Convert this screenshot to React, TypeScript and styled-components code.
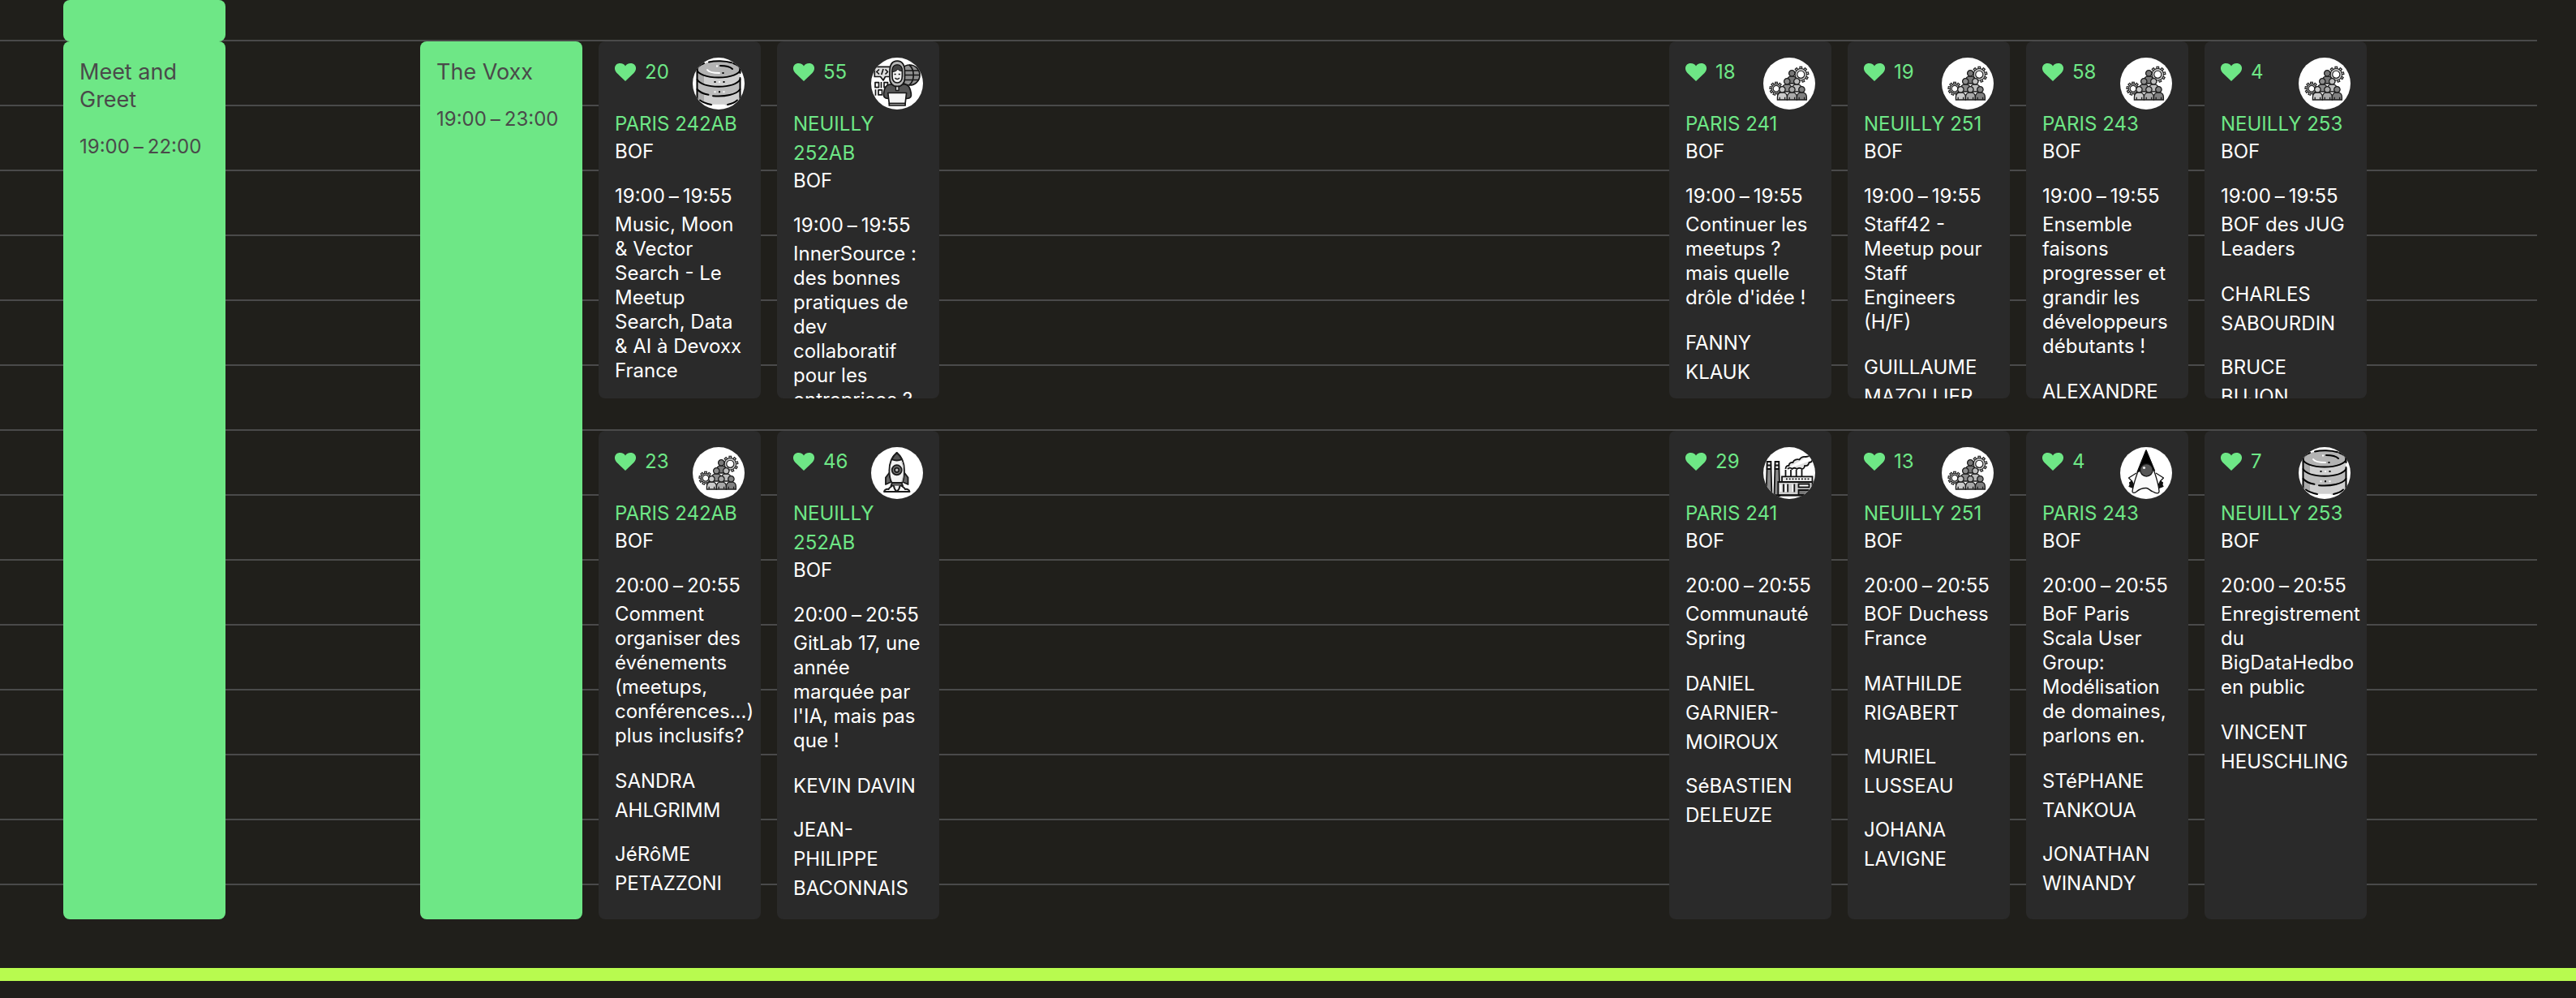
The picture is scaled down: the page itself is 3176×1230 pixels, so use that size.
import React from "react";
import styled, { createGlobalStyle } from "styled-components";

const GlobalStyle = createGlobalStyle`
  *, *::before, *::after { box-sizing: border-box; }
  body {
    margin: 0;
    background: #201f1b;
    color: #ffffff;
    font-family: Inter, "Noto Sans", "Liberation Sans", sans-serif;
    font-size: 24px;
    line-height: 36px;
  }
  h3, p, ul { margin: 0; padding: 0; font-weight: 400; font-size: inherit; }
`;

const Page = styled.main`
  overflow: hidden;
`;

const Schedule = styled.section`
  display: grid;
  grid-template-columns: 68px repeat(13, minmax(0, 1fr)) 200px;
  grid-template-rows: 51px repeat(26, 40px) auto;
  padding-right: 48px;
  margin-bottom: 60px;
`;

const HourLine = styled.div<{ $row: number; $span: number }>`
  grid-column: 1 / -1;
  grid-row: ${(p) => p.$row} / span ${(p) => p.$span};
  border-bottom: 2px solid #4a4a4a;
`;

const Slot = styled.article<{ $col: number; $from: number; $to: number }>`
  grid-column: ${(p) => p.$col};
  grid-row: ${(p) => p.$from} / ${(p) => p.$to};
  margin: 0 10px;
  border-radius: 8px;
`;

const BreakCard = styled(Slot)`
  padding: 21px 20px 20px;
  background: #6ee786;
  color: #4a4a4a;
`;

const BreakTitle = styled.h3`
  font-size: 27px;
  line-height: 34px;
  margin-bottom: 23px;
`;

const TalkCard = styled(Slot)`
  padding: 20px;
  background: #2a2a2a;
  overflow: hidden;
  min-height: 0;
`;

const CardHead = styled.header`
  display: flex;
  justify-content: space-between;
  height: 64px;
`;

const Likes = styled.span`
  display: flex;
  align-items: center;
  gap: 11px;
  height: 36px;
  color: #6ee786;
`;

const Room = styled.p`
  color: #6ee786;
  text-transform: uppercase;
`;

const Kind = styled.p`
  line-height: 32px;
  margin-bottom: 21px;
`;

const TimeRange = styled.p`
  white-space: nowrap;
`;

const Dash = styled.span`
  padding: 0 5px;
`;

const TalkTitle = styled.h3`
  margin: 2px 0 23px;
  line-height: 30px;
`;

const Speakers = styled.ul`
  display: grid;
  gap: 18px;
  list-style: none;
`;

const Divider = styled.hr`
  height: 16px;
  margin: 0;
  border: 0;
  background: #b8fb4f;
`;

const Badge = styled.svg`
  display: block;
  width: 64px;
  height: 64px;
  border-radius: 50%;
  background: #ffffff;
`;

const Heart = () => (
  <svg width="26" height="22" viewBox="0 0 26 22" aria-hidden="true">
    <path
      fill="#6ee786"
      d="M13 22 2.500 12C-.6 9-.8 4.500 1.500 2 3 .4 4.500 0 6.500 0 9.500 0 12 1.500 13 3.500 14 1.500 16.500 0 19.500 0c2 0 3.500.4 5 2 2.300 2.500 2.100 7-1 10z"
    />
  </svg>
);

const DatabaseArt = () => (
  <g fill="none" stroke="#000" strokeWidth="2" strokeLinecap="round">
    <path fill="#cfcfcf" stroke="none" d="M5.500 15V50C9 56 20 59.500 32 59.500S55 56 58.500 50V15z" />
    <path fill="#aaa" stroke="none" d="M5.500 15V50c2 3.200 5 5 8.500 6.500V22z" />
    <path fill="#bcbcbc" stroke="none" d="M5.500 26c6 8 15 10 26.500 10s21-2 26.500-10v13c-6 6.500-15 9-26.500 9S11 45.500 5.500 39z" />
    <ellipse cx="32" cy="14.500" rx="26.500" ry="10" fill="#b3b3b3" stroke="none" />
    <path d="M20 5.500C28 3.600 40 3.800 48 6.300M50 7c6 2 8.600 4.600 8.600 7.500C58.600 20 46.700 24.500 32 24.500S5.400 20 5.400 14.500C5.400 11.500 9 9 14 7" />
    <path d="M5.500 14v38M58.500 14v5M58.500 25v27" />
    <path d="M5.500 27c4 6 14 8.700 26.500 8.700S54.500 33 58.500 27M5.500 39c3 3.500 8 5.700 14 6.800M25 47.200c15 1.300 29-1.700 33.500-8.200M9 52.500c4 3 9 4.500 14 5.500M43 58c5-1 9-2.700 12-5.500" />
    <path d="M34 10c7 0 12 1 15 4" />
    <path stroke="#fff" d="M18 15c2 3 8 4 15 4" />
    <path stroke="#fff" d="M25 58.800h14" />
    <g stroke="none">
      <path fill="#000" d="M36.500 18h2v2h-2zM26.500 29h2v2h-2zM37.500 29h2v2h-2zM32 41.300h2v2h-2z" />
      <path fill="#fff" d="M29 9.500h2v2h-2zM32 29h2v2h-2zM26.500 41.300h2v2h-2zM37.500 41.300h2v2h-2z" />
    </g>
  </g>
);

const HackerArt = () => (
  <g fill="none" stroke="#151515" strokeWidth="1.700" strokeLinejoin="round">
    <circle cx="47.500" cy="21.500" r="12.500" fill="#8f8f8f" />
    <path d="M47 9c7 6 7 19 0 25M36 16h22.500M36 21.500h24M36 27.500h22.500" />
    <path fill="#dcdcdc" d="M4.300 11.300H24v12.200h-6.500l-2.500 4.500-3.500-4.500H4.300z" />
    <path d="M10 14.500 6.800 17.500l3.200 3M15 14l-2.200 7M17.500 14.500l3 3-3 3" />
    <path d="M5 30.700h4.500v6H5zM12.500 30v7.500M16 30.700h4.500v6H16zM5.500 39.200v7.500M9 39.900h4.500v6H9z" />
    <path fill="#555" d="M23 33c-5 1-6.500 4-7.500 11-.6 4 1 6.500 5.500 6.500h23c4.500 0 6-2.500 5.300-6.500-1.200-7-2.800-10-7.600-11z" />
    <path fill="#b8b8b8" d="M32.200 4.200c-6.500 0-9.300 5-9.300 13.500v7.500c0 6.500 4 10.500 9.300 10.500s9.300-4 9.300-10.500v-7.500c0-8.500-2.800-13.500-9.300-13.500z" />
    <path fill="#f1f1f1" d="M32.200 9c-4 0-6.200 3-6.200 8v6c0 5 2.700 8 6.200 8s6.200-3 6.200-8v-6c0-5-2.200-8-6.200-8z" />
    <path fill="#444" strokeWidth="1" d="M26 17.500c0-6 2.700-8.500 6.200-8.500s6.200 2.500 6.200 7.500c-2.500 0-4.500-.6-5.500-2.300-1.200 2-3.500 3.300-6.900 3.300z" />
    <path strokeWidth="1.300" d="M28.500 20.500h2.200M33.700 20.500h2.200M29.500 25c1.500 2 4 2 5.500 0" />
    <path fill="#ddd" strokeWidth="1.300" d="M30.500 35.500h3.500v5h-3.500z" />
    <path fill="#f4f4f4" d="M20.800 43.500h22.800l-1.500 13H22.300z" />
    <path fill="#bbb" d="M22.300 56.500h19.800v2.500H22.300z" />
  </g>
);

const Cog = ({ x, y, r }: { x: number; y: number; r: number }) => (
  <g transform={`translate(${x} ${y})`} fill="#ddd" stroke="#222" strokeWidth="1.200">
    {[0, 40, 80, 120, 160, 200, 240, 280, 320].map((a) => (
      <rect key={a} x="-1.300" y={-r} width="2.600" height="3.500" transform={`rotate(${a})`} />
    ))}
    <circle r={r - 2.400} />
    <circle r={r - 2.900} fill="#c8c8c8" stroke="none" />
    <circle r={r * 0.480} fill="#fff" />
  </g>
);

const Person = ({ x, y, tone }: { x: number; y: number; tone: string }) => (
  <g transform={`translate(${x} ${y})`} fill={tone} stroke="#1c1c1c" strokeWidth="1.300">
    <path d="M-6 12.700V9.500c0-4 2.500-6 6-6s6 2 6 6v3.200z" />
    <path d="M-3.200 12.500V9.500M3.200 12.500V9.500" />
    <circle r="3.700" />
  </g>
);

const TeamArt = () => (
  <g>
    <Cog x={46.3} y={20.8} r={9.5} />
    <Cog x={16} y={38.3} r={8} />
    <Person x={35.3} y={19.3} tone="#777" />
    <Person x={29.3} y={29.3} tone="#8c8c8c" />
    <Person x={41.3} y={29.3} tone="#bdbdbd" />
    <Person x={23.4} y={39.3} tone="#cacaca" />
    <Person x={35.4} y={39.3} tone="#a8a8a8" />
    <Person x={47.4} y={39.3} tone="#808080" />
  </g>
);

const RocketArt = () => (
  <g fill="#f2f2f2" stroke="#1c1c1c" strokeWidth="1.900" strokeLinejoin="round">
    <path fill="#666" d="M23 31l-5 6.500v8.500l6.500-3zM40.500 31l5 6.500v8.500l-6.500-3z" />
    <path d="M31.700 7c-6 5-9.300 13-9.300 22 0 6 1 11 3 15h12.600c2-4 3-9 3-15 0-9-3.300-17-9.300-22z" />
    <path fill="#555" d="M31.700 7c-2.700 2.200-4.800 5-6.300 8.200 4 1.600 8.600 1.600 12.600 0C36.500 12 34.400 9.200 31.700 7z" />
    <path fill="#ccc" stroke="none" d="M37 18c3 9 2.500 18 0 25h1.500c2-7 2.500-16 0-25z" />
    <circle cx="31.700" cy="28.300" r="6" fill="#777" />
    <circle cx="31.700" cy="28.300" r="2.700" fill="#bbb" />
    <path fill="#777" d="M26 44h11.500l1.500 3.500H24.500z" />
    <path d="M28 47.500c0 3 1 5 3.700 7.500 2.700-2.500 3.700-4.500 3.700-7.500" />
    <path fill="none" strokeLinecap="round" d="M16 55h31.500c-.5-2.500-3-3.700-5.500-3-1-2-2.500-2.500-4-4M16 55c.5-2.500 3-3.700 5.500-3 1-2 2.500-2.500 4-4" />
  </g>
);

const FactoryArt = () => (
  <g fill="none" stroke="#111" strokeWidth="1.800">
    <path fill="#8a8a8a" d="M4.800 18h4.500l1.200 42H3.500zM14.700 18h4.500l1.200 42h-7z" />
    <path fill="#eee" d="M4.800 18h4.500v9H4.600zM14.700 18h4.500v9h-4.700z" />
    <path d="M4.500 22.500h5M14.500 22.500h5" />
    <path
      fill="#e2e2e2"
      strokeLinejoin="round"
      d="M27.500 27c0-3 2-4.500 4-4 0-3 2.500-4.500 5-4 1-3.500 5-4.500 8-3.500 2-3 5-4 8-3.500 2 0 4.500-1 7-2.500M30 27c2-2 4-1.500 5.500 0 2-2 4-1.500 6 0 2-1.500 4-1.500 6 0 2 0 3.500-2 3.500-4 3 .5 5-1.500 5.500-4 2 0 3.500-1 4-3"
    />
    <path d="M27.500 28v8M34 28v8M40.700 28v8M47.500 28v8" />
    <path fill="#ececec" d="M23 36.300h37.500V59H23z" />
    <path strokeDasharray="1.800 2" d="M28 39.300h29" />
    <path fill="#cfcfcf" d="M18.300 43h42.200v16.300H18.300z" />
    <path stroke="#fff" d="M21.500 46v9M28 46v9M36.500 46v9" />
    <path d="M25 45.500v10M30.200 45.500v10M38.300 45.500v10" />
    <path fill="#fff" d="M43.500 45.500h13v4h-13z" />
    <path fill="#777" d="M43.500 53h17v6h-17z" />
    <path strokeWidth="2.200" d="M8 59.300h50" />
  </g>
);

const DukeArt = () => (
  <g stroke="#111" strokeWidth="1.300" strokeLinejoin="round">
    <path fill="#fff" d="M20 32l-9.500 6 4 4-3 2 5 4M44 32l9.500 6-4 4 3 2-5 4" />
    <path fill="#111" d="M12 44l2.500-2 2.500 5-1 3.500-5-2 1-1.500zM52 44l-2.500-2-2.500 5 1 3.500 5-2-1-1.500z" />
    <path fill="#fafafa" d="M32 4C26 19 17.500 38 15 54.500c0 2.500 2.500 2.500 5 .5 4-3.500 7-4.500 12-4.500 3 0 5 3.500 8.500 4.500 3.500 2.500 8 3 7.500-1C46.500 38 38 19 32 4z" />
    <path fill="#000" d="M32 4 21 31c6-3.500 15-4 21.500-2z" />
    <circle cx="32.400" cy="28.300" r="7.800" fill="#555" />
    <circle cx="29.500" cy="25.500" r="1.600" fill="#eee" stroke="none" />
  </g>
);

const artwork = {
  database: DatabaseArt,
  hacker: HackerArt,
  team: TeamArt,
  rocket: RocketArt,
  factory: FactoryArt,
  duke: DukeArt,
};

type Talk = {
  col: number;
  likes: number;
  room: string;
  title: string;
  speakers: string[];
  track: keyof typeof artwork;
};

const sevenPm: Talk[] = [
  { col: 5, likes: 20, room: "Paris 242AB", track: "database", title: "Music, Moon & Vector Search - Le Meetup Search, Data & AI à Devoxx France", speakers: [] },
  { col: 6, likes: 55, room: "Neuilly 252AB", track: "hacker", title: "InnerSource : des bonnes pratiques de dev collaboratif pour les entreprises ?", speakers: [] },
  { col: 11, likes: 18, room: "Paris 241", track: "team", title: "Continuer les meetups ? mais quelle drôle d'idée !", speakers: ["FANNY KLAUK"] },
  { col: 12, likes: 19, room: "Neuilly 251", track: "team", title: "Staff42 - Meetup pour Staff Engineers (H/F)", speakers: ["GUILLAUME MAZOLLIER"] },
  { col: 13, likes: 58, room: "Paris 243", track: "team", title: "Ensemble faisons progresser et grandir les développeurs débutants !", speakers: ["ALEXANDRE"] },
  { col: 14, likes: 4, room: "Neuilly 253", track: "team", title: "BOF des JUG Leaders", speakers: ["CHARLES SABOURDIN", "BRUCE BUJON"] },
];

const eightPm: Talk[] = [
  { col: 5, likes: 23, room: "Paris 242AB", track: "team", title: "Comment organiser des événements (meetups, conférences...) plus inclusifs?", speakers: ["SANDRA AHLGRIMM", "JéRôME PETAZZONI"] },
  { col: 6, likes: 46, room: "Neuilly 252AB", track: "rocket", title: "GitLab 17, une année marquée par l'IA, mais pas que !", speakers: ["KEVIN DAVIN", "JEAN-PHILIPPE BACONNAIS"] },
  { col: 11, likes: 29, room: "Paris 241", track: "factory", title: "Communauté Spring", speakers: ["DANIEL GARNIER-MOIROUX", "SéBASTIEN DELEUZE"] },
  { col: 12, likes: 13, room: "Neuilly 251", track: "team", title: "BOF Duchess France", speakers: ["MATHILDE RIGABERT", "MURIEL LUSSEAU", "JOHANA LAVIGNE"] },
  { col: 13, likes: 4, room: "Paris 243", track: "duke", title: "BoF Paris Scala User Group: Modélisation de domaines, parlons en.", speakers: ["STéPHANE TANKOUA", "JONATHAN WINANDY"] },
  { col: 14, likes: 7, room: "Neuilly 253", track: "database", title: "Enregistrement du BigDataHedbo en public", speakers: ["VINCENT HEUSCHLING"] },
];

const Times = ({ start, end }: { start: string; end: string }) => (
  <TimeRange>
    {start}
    <Dash>–</Dash>
    {end}
  </TimeRange>
);

const TalkSlot = ({ talk, start, end, from, to }: { talk: Talk; start: string; end: string; from: number; to: number }) => {
  const Art = artwork[talk.track];
  return (
    <TalkCard $col={talk.col} $from={from} $to={to}>
      <CardHead>
        <Likes>
          <Heart />
          {talk.likes}
        </Likes>
        <Badge viewBox="0 0 64 64" aria-hidden="true">
          <Art />
        </Badge>
      </CardHead>
      <Room>{talk.room}</Room>
      <Kind>BOF</Kind>
      <Times start={start} end={end} />
      <TalkTitle>{talk.title}</TalkTitle>
      <Speakers>
        {talk.speakers.map((name) => (
          <li key={name}>{name}</li>
        ))}
      </Speakers>
    </TalkCard>
  );
};

export default function App() {
  return (
    <>
      <GlobalStyle />
      <Page>
        <Schedule>
          <HourLine $row={1} $span={1} />
          {Array.from({ length: 13 }, (_, i) => (
            <HourLine key={i} $row={2 + i * 2} $span={2} />
          ))}
          <BreakCard $col={2} $from={1} $to={2} />
          <BreakCard $col={2} $from={2} $to={29}>
            <BreakTitle>Meet and Greet</BreakTitle>
            <Times start="19:00" end="22:00" />
          </BreakCard>
          <BreakCard $col={4} $from={2} $to={29}>
            <BreakTitle>The Voxx</BreakTitle>
            <Times start="19:00" end="23:00" />
          </BreakCard>
          {sevenPm.map((talk) => (
            <TalkSlot key={talk.room} talk={talk} start="19:00" end="19:55" from={2} to={13} />
          ))}
          {eightPm.map((talk) => (
            <TalkSlot key={talk.room} talk={talk} start="20:00" end="20:55" from={14} to={29} />
          ))}
        </Schedule>
        <Divider />
      </Page>
    </>
  );
}
